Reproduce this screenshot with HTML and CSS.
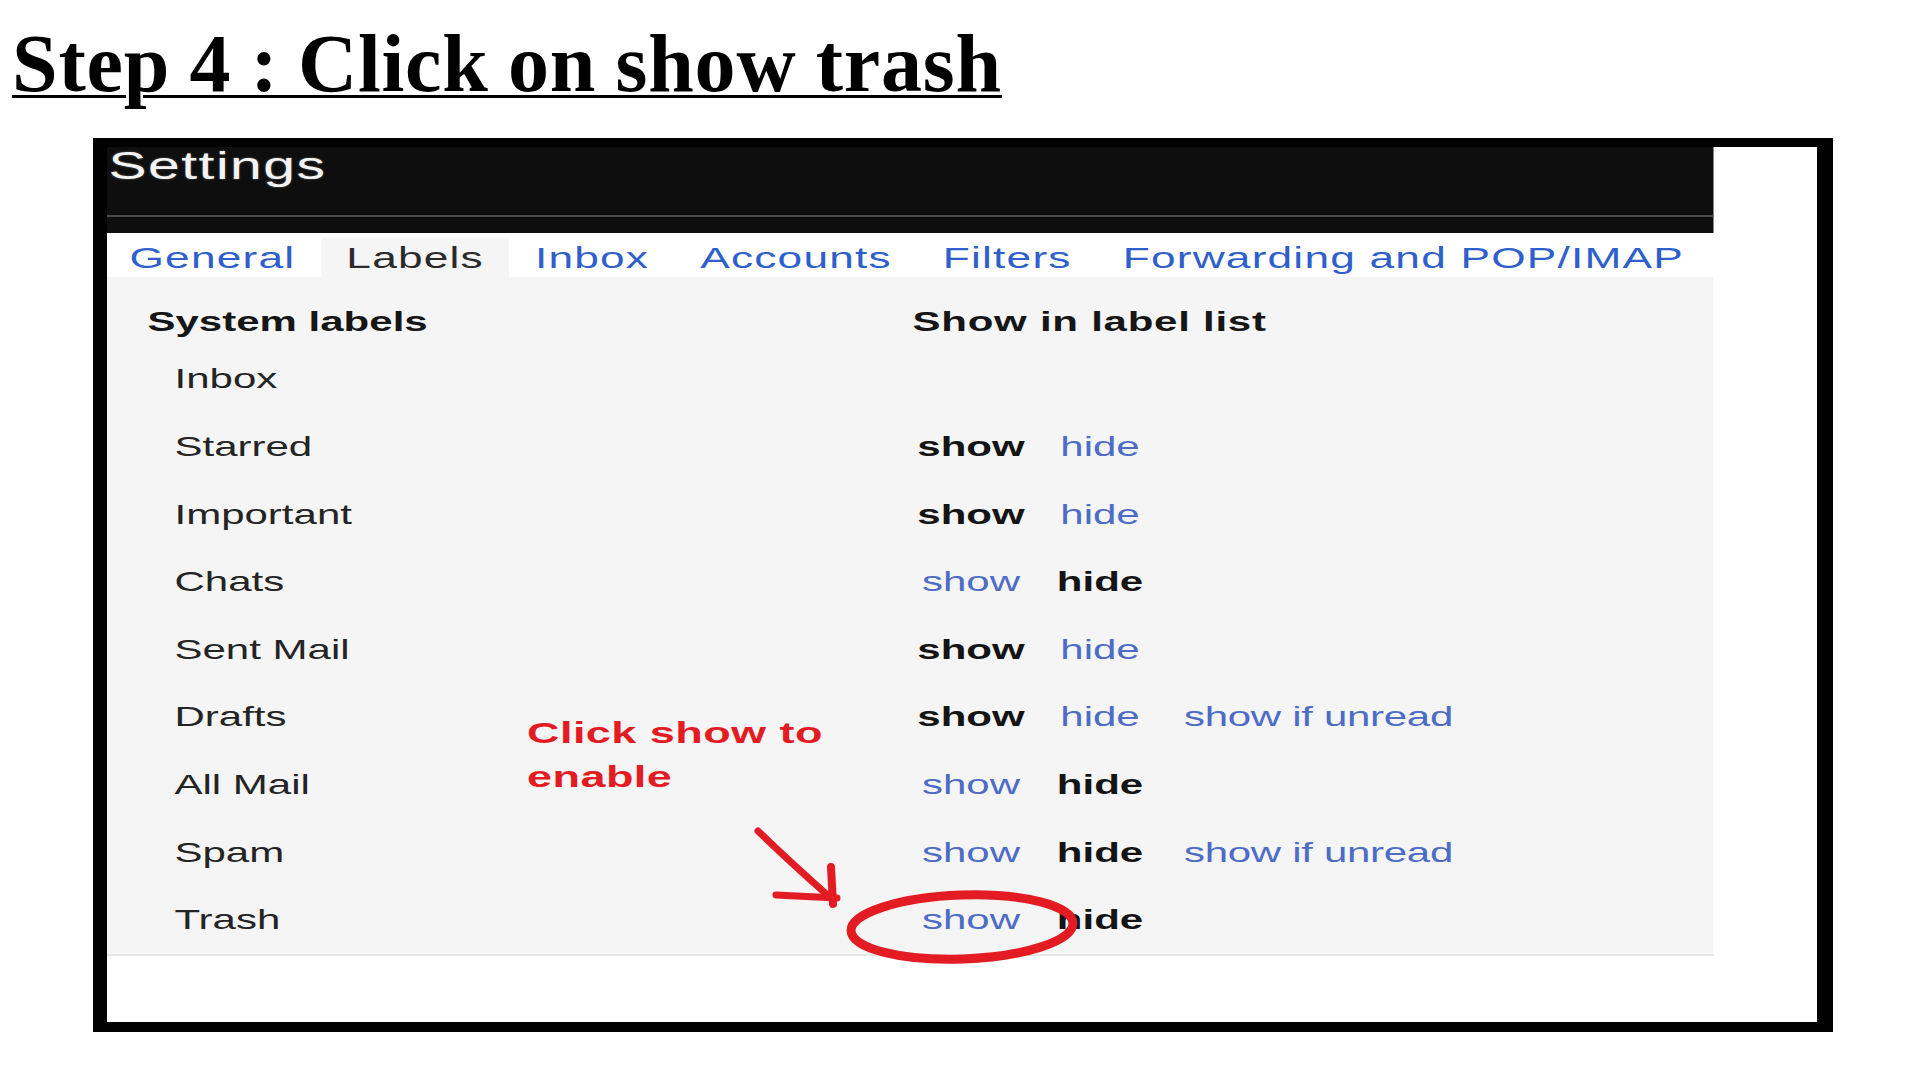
FILE: index.html
```html
<!DOCTYPE html>
<html lang="en">
<head>
<meta charset="utf-8">
<title>Step 4 : Click on show trash</title>
<link rel="stylesheet" href="styles.css">
</head>
<body>
<h1 class="title">Step 4 : Click on show trash</h1>
<div class="frame">
  <div class="gm">
    <div class="gm-header">
      <div class="gm-title">Settings</div>
      <div class="gm-rule"></div>
    </div>
    <nav class="tabs">
      <span class="tab first">General</span>
      <span class="tab active">Labels</span>
      <span class="tab">Inbox</span>
      <span class="tab">Accounts</span>
      <span class="tab">Filters</span>
      <span class="tab">Forwarding and POP/IMAP</span>
    </nav>
    <div class="labels">
      <div class="lrow head"><span class="hcol">System labels</span><span class="hshow">Show in label list</span></div>
      <div class="lrow"><span class="name">Inbox</span></div>
      <div class="lrow"><span class="name">Starred</span><span class="cell on">show</span><span class="cell link">hide</span></div>
      <div class="lrow"><span class="name">Important</span><span class="cell on">show</span><span class="cell link">hide</span></div>
      <div class="lrow"><span class="name">Chats</span><span class="cell link">show</span><span class="cell on">hide</span></div>
      <div class="lrow"><span class="name">Sent Mail</span><span class="cell on">show</span><span class="cell link">hide</span></div>
      <div class="lrow"><span class="name">Drafts</span><span class="cell on">show</span><span class="cell link">hide</span><span class="unread link">show if unread</span></div>
      <div class="lrow"><span class="name">All Mail</span><span class="cell link">show</span><span class="cell on">hide</span></div>
      <div class="lrow"><span class="name">Spam</span><span class="cell link">show</span><span class="cell on">hide</span><span class="unread link">show if unread</span></div>
      <div class="lrow"><span class="name">Trash</span><span class="cell link">show</span><span class="cell on">hide</span></div>
      <div class="note">Click show to<br>enable</div>
    </div>
  </div>
</div>
<svg class="marks" width="1920" height="1080" viewBox="0 0 1920 1080" aria-hidden="true">
  <g fill="none" stroke="#e31b23" stroke-linecap="round" stroke-linejoin="round">
    <path d="M758 831 Q790 862 833 900" stroke-width="7"/>
    <path d="M831 867 L833 904" stroke-width="8"/>
    <path d="M776 895 L837 898" stroke-width="7"/>
    <ellipse cx="962" cy="927" rx="111" ry="32" stroke-width="9" transform="rotate(-2 962 927)"/>
  </g>
</svg>
</body>
</html>
```
FILE: styles.css
```css
html, body {
  margin: 0;
  padding: 0;
  background: #ffffff;
}

body {
  width: 1920px;
  height: 1080px;
  position: relative;
  overflow: hidden;
  font-family: "Liberation Sans", Arial, sans-serif;
}

.title {
  margin: 0;
  padding: 14px 0 0 12px;
  font-family: "Liberation Serif", "Times New Roman", serif;
  font-weight: 700;
  font-size: 82px;
  line-height: 100px;
  letter-spacing: 0.8px;
  word-spacing: -2px;
  color: #000;
  text-decoration: underline;
  text-decoration-thickness: 3px;
  text-underline-offset: 4px;
  white-space: nowrap;
}

.frame {
  margin: 24px 0 0 93px;
  width: 1710px;
  height: 875px;
  border-style: solid;
  border-color: #000;
  border-width: 9px 16px 10px 14px;
  background: #ffffff;
  overflow: hidden;
}

/* The Gmail screenshot is stretched horizontally */
.gm {
  width: 1070.67px;
  transform: scaleX(1.5);
  transform-origin: 0 0;
}

.gm-header {
  background: #0e0e0e;
  height: 86px;
  box-sizing: border-box;
}

.gm-title {
  color: #f4f4f4;
  font-size: 38px;
  line-height: 39px;
  letter-spacing: 1px;
  padding-left: 1px;
  text-shadow: 0 0 2px rgba(255,255,255,0.35);
}

.gm-rule {
  margin-top: 29px;
  height: 2px;
  background: #4a4a4a;
}

.tabs {
  display: flex;
  background: #ffffff;
  padding-top: 5px;
  height: 44px;
  box-sizing: border-box;
}

.tab {
  padding: 0 17px;
  font-size: 29.5px;
  line-height: 39px;
  letter-spacing: 0.8px;
  color: #2f5fcc;
  white-space: nowrap;
}

.tab.first {
  padding-left: 15px;
}

.tab.active {
  background: #f5f5f5;
  color: #2a2a2a;
}

.labels {
  position: relative;
  background: #f5f5f5;
  border-bottom: 2px solid #e6e6e6;
  padding-top: 22px;
  font-size: 28px;
  color: #222;
}

.lrow {
  display: grid;
  grid-template-columns: 537px 78px 94px 1fr;
  height: 67.6px;
  line-height: 67.6px;
  white-space: nowrap;
}

.lrow.head {
  height: 46.4px;
  line-height: 46.4px;
  font-weight: 700;
  color: #161616;
}

.hcol {
  padding-left: 27px;
}

.hshow {
  grid-column: 2 / -1;
  letter-spacing: 0.5px;
}

.name {
  padding-left: 45px;
  color: #242424;
}

.cell {
  text-align: center;
}

.on {
  font-weight: 700;
  color: #141414;
}

.link {
  color: #4d6cc6;
}

.unread {
  padding-left: 9px;
  letter-spacing: -0.2px;
}

.note {
  position: absolute;
  left: 280px;
  top: 434px;
  font-size: 30px;
  line-height: 44px;
  font-weight: 700;
  letter-spacing: 0.3px;
  color: #e31b23;
  white-space: nowrap;
}

.marks {
  position: absolute;
  left: 0;
  top: 0;
  pointer-events: none;
}
```
